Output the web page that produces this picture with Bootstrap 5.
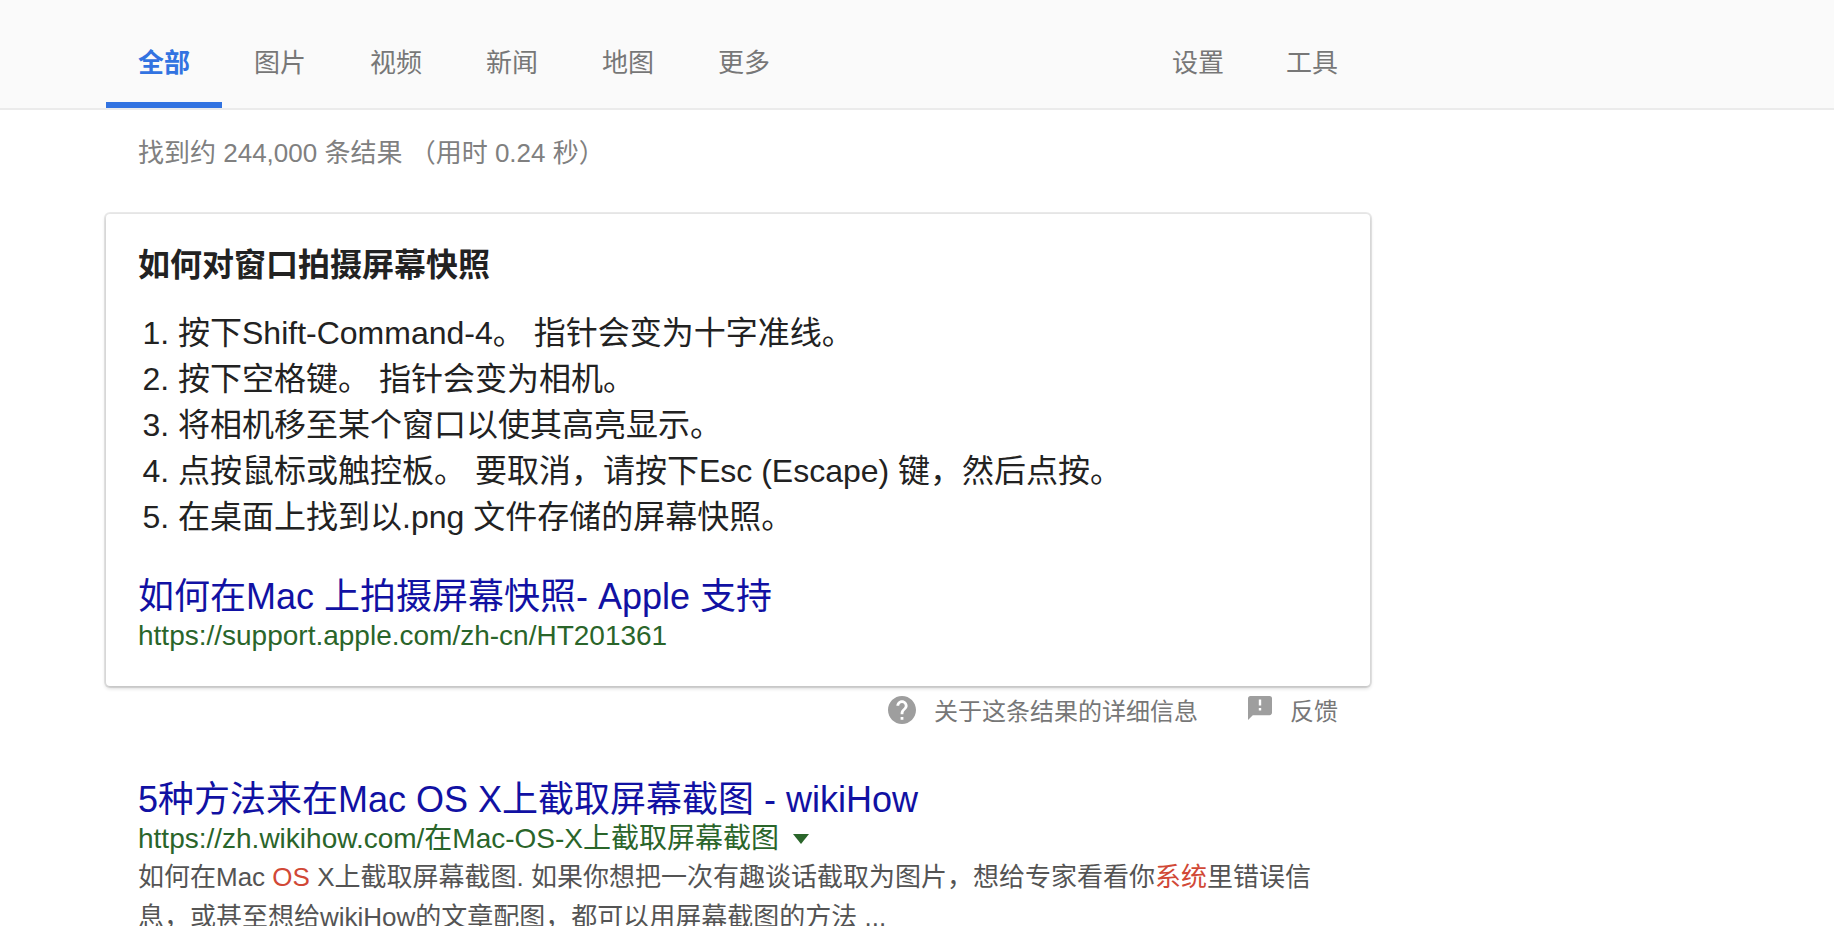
<!DOCTYPE html>
<html lang="zh-CN">
<head>
<meta charset="utf-8">
<meta name="viewport" content="width=device-width, initial-scale=1">
<title>如何对窗口拍摄屏幕快照</title>
<link href="https://cdn.jsdelivr.net/npm/bootstrap@5.3.0/dist/css/bootstrap.min.css" rel="stylesheet">
<style>
  body { font-family: "Liberation Sans", "Noto Sans CJK SC", sans-serif; font-size: 26px; line-height: 40px; color: #222; background: #fff; }
  a { text-decoration: none; }
  .page-column { max-width: 1264px; margin-left: 106px; }
  .inset { padding-left: 32px; padding-right: 32px; }
  .topbar { background: #fafafa; border-bottom: 2px solid #ebebeb; }
  .tab-link { display: block; padding: 43px 32px 19px; border-bottom: 6px solid transparent; color: #777; white-space: nowrap; }
  .tab-link.active { color: #3273e1; border-color: #3273e1; font-weight: 700; }
  .tool-links { gap: 62px; }
  .tool-links .tab-link { padding-left: 0; padding-right: 0; }
  .stats { color: #808080; padding-top: 23px; margin-bottom: 41px; }
  .answer { border-radius: 4px; padding-top: 28px; padding-bottom: 32px; box-shadow: 0 2px 4px rgba(0,0,0,.2), 0 0 0 2px rgba(0,0,0,.08); }
  .answer h2 { font-size: 32px; line-height: 46px; font-weight: 700; margin-bottom: 22px; }
  .answer ol { font-size: 32px; line-height: 46px; padding-left: 40px; margin-bottom: 36px; }
  .result-title { font-size: 36px; line-height: 42px; font-weight: 400; margin: 0; }
  .result-title a { color: #1111a3; }
  .result-url { font-size: 28px; line-height: 36px; color: #2a652a; }
  .caret { border: 0; padding: 0; background: none; line-height: 0; margin-left: 14px; }
  .below { font-size: 24px; line-height: 32px; padding-top: 10px; gap: 50px; margin-bottom: 51px; }
  .below a { color: #777; gap: 18px; }
  .below svg { fill: #9e9e9e; }
  .snippet { color: #545454; max-width: 1180px; }
  .snippet em { font-style: normal; color: #d14836; }
</style>
</head>
<body class="vh-100 overflow-hidden">
<header class="topbar">
  <nav class="page-column d-flex justify-content-between" aria-label="搜索类型">
    <div class="d-flex">
      <a class="tab-link active" href="#" aria-current="page">全部</a>
      <a class="tab-link" href="#">图片</a>
      <a class="tab-link" href="#">视频</a>
      <a class="tab-link" href="#">新闻</a>
      <a class="tab-link" href="#">地图</a>
      <a class="tab-link" href="#">更多</a>
    </div>
    <div class="tool-links inset d-flex">
      <a class="tab-link" href="#">设置</a>
      <a class="tab-link" href="#">工具</a>
    </div>
  </nav>
</header>

<main class="page-column">
  <p class="stats inset">找到约 244,000 条结果 （用时 0.24 秒）</p>

  <section class="answer inset">
    <h2>如何对窗口拍摄屏幕快照</h2>
    <ol>
      <li>按下Shift-Command-4。 指针会变为十字准线。</li>
      <li>按下空格键。 指针会变为相机。</li>
      <li>将相机移至某个窗口以使其高亮显示。</li>
      <li>点按鼠标或触控板。 要取消，请按下Esc (Escape) 键，然后点按。</li>
      <li>在桌面上找到以.png 文件存储的屏幕快照。</li>
    </ol>
    <h3 class="result-title"><a href="#">如何在Mac 上拍摄屏幕快照- Apple 支持</a></h3>
    <div class="result-url">https://support.apple.com/zh-cn/HT201361</div>
  </section>

  <div class="below inset d-flex justify-content-end">
    <a class="d-flex" href="#">
      <svg width="28" height="28" viewBox="2 2 20 20" aria-hidden="true"><path d="M12 2C6.480 2 2 6.480 2 12s4.480 10 10 10 10-4.480 10-10S17.520 2 12 2zm1 17h-2v-2h2v2zm2.070-7.750-.9.920C13.450 12.900 13 13.500 13 15h-2v-.5c0-1.100.450-2.100 1.170-2.830l1.240-1.260c.370-.360.590-.860.590-1.410 0-1.100-.9-2-2-2s-2 .9-2 2H8c0-2.210 1.790-4 4-4s4 1.790 4 4c0 .880-.360 1.680-.930 2.250z"/></svg>
      关于这条结果的详细信息
    </a>
    <a class="d-flex" href="#">
      <svg width="24" height="24" viewBox="2 2 20 20" aria-hidden="true"><path d="M20 2H4c-1.100 0-1.990.9-1.990 2L2 22l4-4h14c1.100 0 2-.9 2-2V4c0-1.100-.9-2-2-2zm-7 12h-2v-2h2v2zm0-4h-2V5h2v5z"/></svg>
      反馈
    </a>
  </div>

  <article class="inset">
    <h3 class="result-title"><a href="#">5种方法来在Mac OS X上截取屏幕截图 - wikiHow</a></h3>
    <div class="result-url d-flex align-items-center">https://zh.wikihow.com/在Mac-OS-X上截取屏幕截图<button class="caret" type="button" aria-label="更多选项"><svg width="16" height="10" viewBox="0 0 16 10" fill="#2a652a"><path d="M0 0h16L8 10z"/></svg></button></div>
    <p class="snippet mb-0">如何在Mac <em>OS</em> X上截取屏幕截图. 如果你想把一次有趣谈话截取为图片，想给专家看看你<em>系统</em>里错误信息，或甚至想给wikiHow的文章配图，都可以用屏幕截图的方法 ...</p>
  </article>
</main>
<script src="https://cdn.jsdelivr.net/npm/bootstrap@5.3.0/dist/js/bootstrap.bundle.min.js"></script>
</body>
</html>
